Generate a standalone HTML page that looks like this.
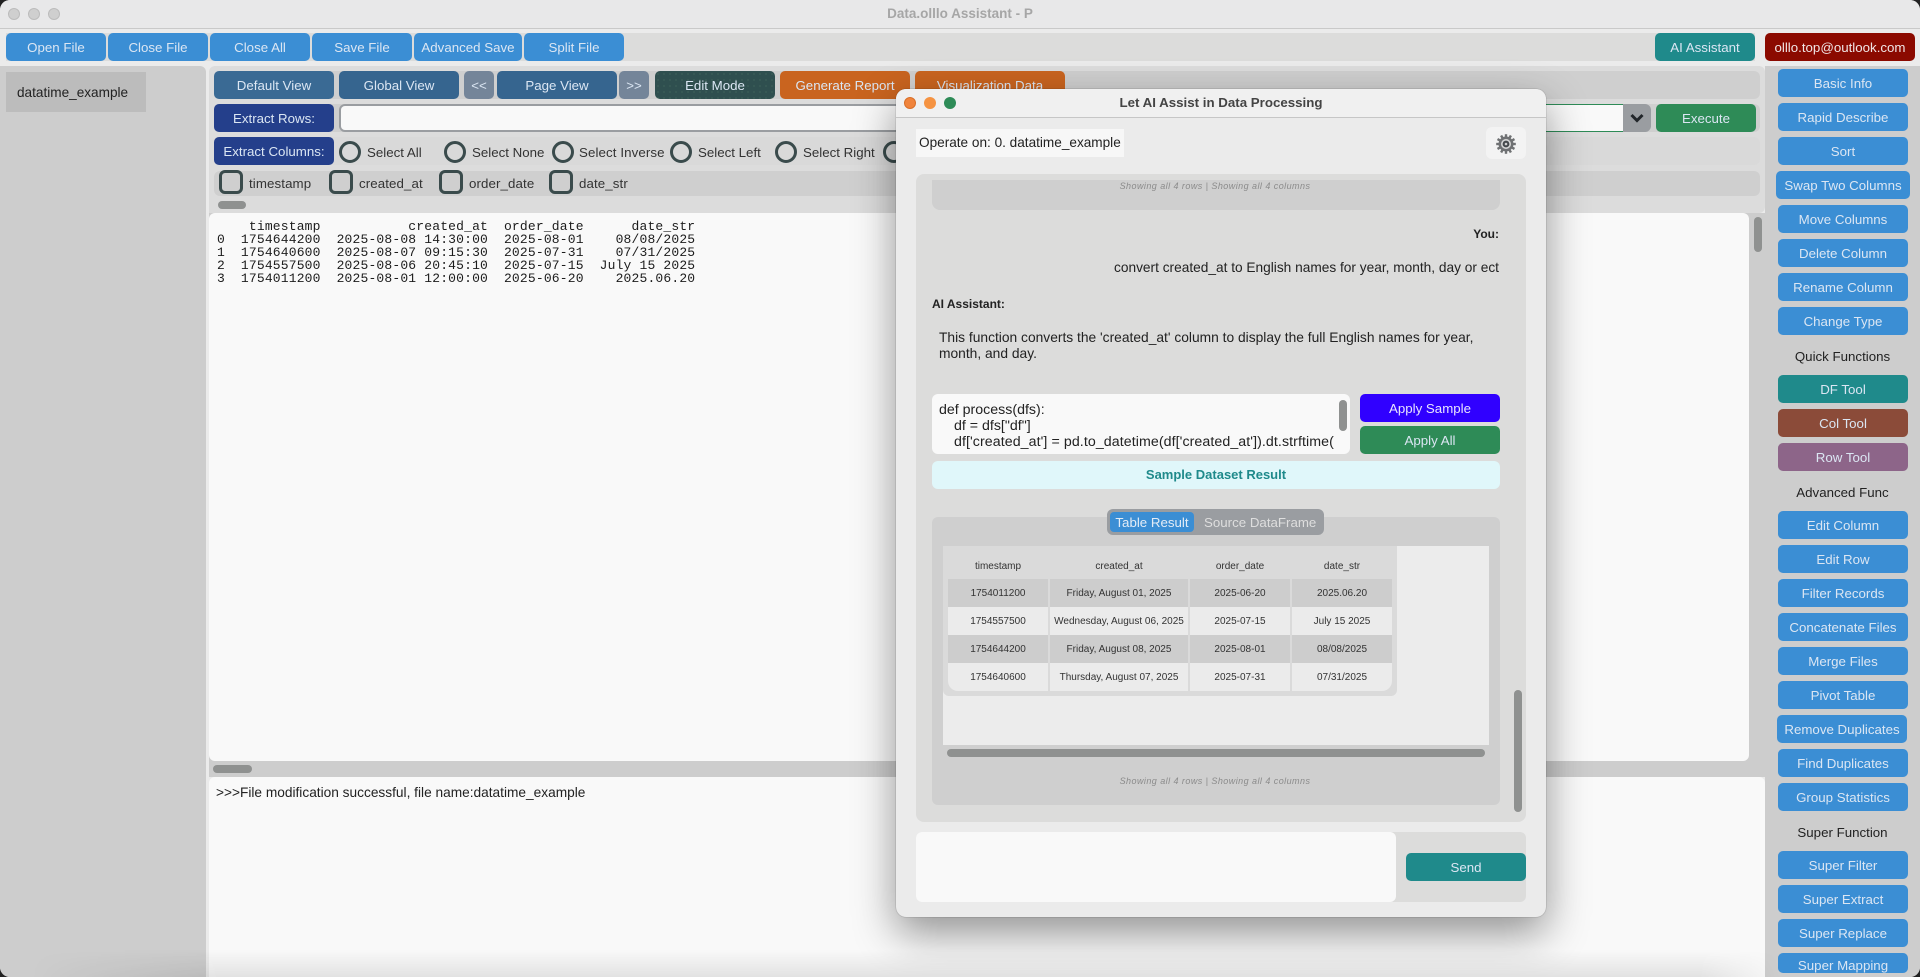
<!DOCTYPE html>
<html lang="en"><head><meta charset="utf-8"><title>Data.olllo Assistant - P</title>
<style>
html,body{margin:0;padding:0;width:1920px;height:977px;overflow:hidden;background:#222}
body{font-family:"Liberation Sans",sans-serif;font-size:13.3px;color:#222}
#w{position:absolute;left:0;top:0;width:1920px;height:977px;background:#ebebeb;border-radius:10px;overflow:hidden}
#w div,#w span.a,#w pre{position:absolute;box-sizing:border-box}
.b{height:28px;border-radius:5px;color:#dbe6f3;text-align:center;line-height:29px;background:#3b8ed4;white-space:nowrap}
.r{left:1778px;width:130px}
.l{left:1765px;width:155px;text-align:center;height:18px;line-height:20px;color:#222}
.s{height:28px;background:#cfcfcf;border-radius:6px}
.rad{width:22px;height:22px;border:3px solid #3a4b4c;border-radius:50%;top:141px}
.chk{width:24px;height:24px;border:3px solid #3a4b4c;border-radius:6px;top:170px}
.t{white-space:nowrap;line-height:18px;height:18px;color:#333}
.sb{background:#8f9190;border-radius:4px}
.c{height:28px;line-height:30px;text-align:center;font-size:10px;color:#333;white-space:nowrap}
.sh{font-style:italic;font-size:9px;letter-spacing:.45px;color:#8b8b8b;white-space:nowrap;text-align:center;line-height:12px;height:12px}
.p{font-size:13.75px}
</style></head><body>
<div id="w">
<!-- title bar -->
<div style="left:0;top:0;width:1920px;height:29px;background:#e8e8e9;border-bottom:1px solid #c9c9c9"></div>
<div style="left:8px;top:8px;width:12px;height:12px;border-radius:50%;background:#cfcfcf;border:1px solid #bcbcbc"></div>
<div style="left:28px;top:8px;width:12px;height:12px;border-radius:50%;background:#cfcfcf;border:1px solid #bcbcbc"></div>
<div style="left:48px;top:8px;width:12px;height:12px;border-radius:50%;background:#cfcfcf;border:1px solid #bcbcbc"></div>
<div style="left:760px;top:5px;width:400px;height:18px;line-height:18px;text-align:center;font-weight:bold;color:#a6a6a6;font-size:13.5px">Data.olllo Assistant - P</div>
<!-- toolbar -->
<div style="left:6px;top:33px;width:1749px;height:28px;background:#dcdcdb"></div>
<div class="b" style="left:6px;top:33px;width:100px">Open File</div>
<div class="b" style="left:108px;top:33px;width:100px">Close File</div>
<div class="b" style="left:210px;top:33px;width:100px">Close All</div>
<div class="b" style="left:312px;top:33px;width:100px">Save File</div>
<div class="b" style="left:414px;top:33px;width:108px">Advanced Save</div>
<div class="b" style="left:524px;top:33px;width:100px">Split File</div>
<div class="b" style="left:1655px;top:33px;width:100px;background:#1f8a8b">AI Assistant</div>
<div class="b" style="left:1765px;top:33px;width:150px;background:#8b0a00;color:#f0e6e6">olllo.top@outlook.com</div>
<!-- left panel -->
<div style="left:0;top:66px;width:206px;height:911px;background:#cdcdcd;border-radius:0 6px 0 0"></div>
<div style="left:6px;top:72px;width:140px;height:40px;background:#bcbcbc"></div>
<div class="t" style="left:17px;top:84px;color:#222;font-size:13.6px">datatime_example</div>
<!-- main upper -->
<div style="left:209px;top:66px;width:1556px;height:147px;background:#dcdcdc;border-radius:6px 6px 6px 0"></div>
<div class="s" style="left:214px;top:71px;width:1546px"></div>
<div class="b" style="left:214px;top:71px;width:120px;background:#3a6a94">Default View</div>
<div class="b" style="left:339px;top:71px;width:120px;background:#36658f">Global View</div>
<div class="b" style="left:464px;top:71px;width:30px;background:#748599">&lt;&lt;</div>
<div class="b" style="left:497px;top:71px;width:120px;background:#36658f">Page View</div>
<div class="b" style="left:619px;top:71px;width:30px;background:#748599">&gt;&gt;</div>
<div class="b" style="left:655px;top:71px;width:120px;background-color:#2f4f4f;background-image:radial-gradient(#47705f .5px,transparent .8px);background-size:6px 6px">Edit Mode</div>
<div class="b" style="left:780px;top:71px;width:130px;background:#c9641f">Generate Report</div>
<div class="b" style="left:915px;top:71px;width:150px;background:#c9641f">Visualization Data</div>
<div class="s" style="left:214px;top:104px;width:1546px"></div>
<div class="b" style="left:214px;top:104px;width:120px;background:#243f8b">Extract Rows:</div>
<div style="left:339px;top:104px;width:1284px;height:28px;background:#f9f9f9;border:2px solid #9a9da1;border-right:0;border-radius:6px 0 0 6px"></div>
<div style="left:1400px;top:104px;width:223px;height:28px;background:#f9f9f9;border-top:1px solid #2e8b57;border-bottom:1px solid #2e8b57"></div>
<div style="left:1623px;top:104px;width:28px;height:28px;background:#9a9da1;border-radius:0 6px 6px 0"></div>
<svg style="position:absolute;left:1630px;top:112px" width="14" height="12" viewBox="0 0 14 12"><path d="M1.5 3 L7 8.5 L12.5 3" fill="none" stroke="#22262a" stroke-width="3"/></svg>
<div class="b" style="left:1656px;top:104px;width:100px;background:#2e8b57">Execute</div>
<div class="s" style="left:214px;top:137px;width:1546px;background:#d9d9d9"></div>
<div class="b" style="left:214px;top:137px;width:120px;background:#243f8b">Extract Columns:</div>
<div class="rad" style="left:339px"></div><div class="t" style="left:367px;top:144px">Select All</div>
<div class="rad" style="left:444px"></div><div class="t" style="left:472px;top:144px">Select None</div>
<div class="rad" style="left:552px"></div><div class="t" style="left:579px;top:144px;letter-spacing:.1px">Select Inverse</div>
<div class="rad" style="left:670px"></div><div class="t" style="left:698px;top:144px">Select Left</div>
<div class="rad" style="left:775px"></div><div class="t" style="left:803px;top:144px">Select Right</div>
<div class="rad" style="left:883px"></div>
<div class="s" style="left:214px;top:171px;width:1546px;height:25px"></div>
<div class="chk" style="left:219px"></div><div class="t" style="left:249px;top:174.5px;letter-spacing:.1px">timestamp</div>
<div class="chk" style="left:329px"></div><div class="t" style="left:359px;top:174.5px;letter-spacing:.1px">created_at</div>
<div class="chk" style="left:439px"></div><div class="t" style="left:469px;top:174.5px;letter-spacing:.1px">order_date</div>
<div class="chk" style="left:549px"></div><div class="t" style="left:579px;top:174.5px;letter-spacing:.1px">date_str</div>
<div class="sb" style="left:218px;top:201px;width:28px;height:8px"></div>
<!-- data area -->
<div style="left:209px;top:213px;width:1556px;height:564px;background:#cdcdcd"></div>
<div style="left:209px;top:213px;width:1540px;height:548px;background:#f9f9f9;border-radius:6px"></div>
<pre style="left:217px;top:220px;margin:0;font:13px/13px 'Liberation Mono',monospace;letter-spacing:.17px;color:#1c1c1c">    timestamp           created_at  order_date      date_str
0  1754644200  2025-08-08 14:30:00  2025-08-01    08/08/2025
1  1754640600  2025-08-07 09:15:30  2025-07-31    07/31/2025
2  1754557500  2025-08-06 20:45:10  2025-07-15  July 15 2025
3  1754011200  2025-08-01 12:00:00  2025-06-20    2025.06.20</pre>
<div class="sb" style="left:1754px;top:217px;width:8px;height:35px"></div>
<div class="sb" style="left:213px;top:765px;width:39px;height:8px"></div>
<!-- log -->
<div style="left:209px;top:777px;width:1556px;height:200px;background:#f9f9f9;border-radius:6px 6px 0 0"></div>
<div class="t p" style="left:216px;top:784px;color:#222;font-size:13.7px">&gt;&gt;&gt;File modification successful, file name:datatime_example</div>
<!-- right panel -->
<div style="left:1765px;top:66px;width:155px;height:911px;background:#cdcdcd"></div>
<div class="b r" style="top:69px">Basic Info</div>
<div class="b r" style="top:103px">Rapid Describe</div>
<div class="b r" style="top:137px">Sort</div>
<div class="b" style="left:1776px;width:134px;top:171px">Swap Two Columns</div>
<div class="b r" style="top:205px">Move Columns</div>
<div class="b r" style="top:239px">Delete Column</div>
<div class="b r" style="top:273px">Rename Column</div>
<div class="b r" style="top:307px">Change Type</div>
<div class="l" style="top:347px">Quick Functions</div>
<div class="b r" style="top:375px;background:#1f8a8b">DF Tool</div>
<div class="b r" style="top:409px;background:#8b4b39">Col Tool</div>
<div class="b r" style="top:443px;background:#8d6589">Row Tool</div>
<div class="l" style="top:483px">Advanced Func</div>
<div class="b r" style="top:511px">Edit Column</div>
<div class="b r" style="top:545px">Edit Row</div>
<div class="b r" style="top:579px">Filter Records</div>
<div class="b r" style="top:613px">Concatenate Files</div>
<div class="b r" style="top:647px">Merge Files</div>
<div class="b r" style="top:681px">Pivot Table</div>
<div class="b" style="left:1777px;width:130px;top:715px">Remove Duplicates</div>
<div class="b r" style="top:749px">Find Duplicates</div>
<div class="b r" style="top:783px">Group Statistics</div>
<div class="l" style="top:823px">Super Function</div>
<div class="b r" style="top:851px">Super Filter</div>
<div class="b r" style="top:885px">Super Extract</div>
<div class="b r" style="top:919px">Super Replace</div>
<div class="b r" style="top:953px;height:20px;line-height:25px;overflow:hidden">Super Mapping</div>
<!-- bottom shade -->
<div style="left:0;top:950px;width:1780px;height:27px;background:linear-gradient(rgba(0,0,0,0),rgba(0,0,0,.09));-webkit-mask-image:linear-gradient(90deg,transparent 30px,#000 220px,#000 1700px,transparent);mask-image:linear-gradient(90deg,transparent 30px,#000 220px,#000 1700px,transparent)"></div>
<!-- dialog -->
<div style="left:896px;top:89px;width:650px;height:828px;background:#ebebeb;border-radius:10px;box-shadow:0 16px 42px rgba(0,0,0,.42),0 0 1px rgba(0,0,0,.5)">
<div style="left:0;top:0;width:650px;height:29px;background:#f0f0f0;border-bottom:1px solid #c6c6c6;border-radius:10px 10px 0 0"></div>
<div style="left:8px;top:8px;width:12px;height:12px;border-radius:50%;background:#f0843c;border:1px solid #d96f28"></div>
<div style="left:28px;top:8px;width:12px;height:12px;border-radius:50%;background:#f59342"></div>
<div style="left:48px;top:8px;width:12px;height:12px;border-radius:50%;background:#2e8b57"></div>
<div style="left:0;top:5px;width:650px;height:18px;line-height:18px;text-align:center;font-weight:bold;color:#444;font-size:13.3px">Let AI Assist in Data Processing</div>
</div>
<div style="left:916px;top:129px;width:208px;height:28px;background:#f7f7f7"></div>
<div class="t" style="left:919px;top:134px;color:#222;font-size:13.6px">Operate on: 0. datatime_example</div>
<div style="left:1486px;top:127px;width:40px;height:32px;background:#f3f3f3;border-radius:6px"></div>
<svg style="position:absolute;left:1495px;top:133px;filter:blur(.35px)" width="22" height="22" viewBox="0 0 22 22"><g fill="#6f7173"><circle cx="11" cy="11" r="7.5"/><rect x="9.8" y="1.2" width="2.4" height="19.6"/><rect x="9.8" y="1.2" width="2.4" height="19.6" transform="rotate(30 11 11)"/><rect x="9.8" y="1.2" width="2.4" height="19.6" transform="rotate(60 11 11)"/><rect x="9.8" y="1.2" width="2.4" height="19.6" transform="rotate(90 11 11)"/><rect x="9.8" y="1.2" width="2.4" height="19.6" transform="rotate(120 11 11)"/><rect x="9.8" y="1.2" width="2.4" height="19.6" transform="rotate(150 11 11)"/></g><circle cx="11" cy="11" r="5" fill="#d6d6d6"/><circle cx="11" cy="11" r="3.4" fill="#45494c"/><circle cx="11" cy="11" r="1.3" fill="#cfcfcf"/></svg>
<!-- chat panel -->
<div style="left:916px;top:174px;width:610px;height:648px;background:#dcdcdb;border-radius:8px"></div>
<div style="left:932px;top:180px;width:568px;height:30px;background:#cfcfcf;border-radius:0 0 8px 8px"></div>
<div class="sh" style="left:932px;top:180px;width:566px">Showing all 4 rows | Showing all 4 columns</div>
<div class="t" style="left:1300px;width:199px;top:225px;text-align:right;font-weight:bold;color:#222;font-size:12px">You:</div>
<div class="t" style="left:1050px;width:449px;top:259px;text-align:right;color:#222;font-size:13.7px">convert created_at to English names for year, month, day or ect</div>
<div class="t" style="left:932px;top:295px;font-weight:bold;color:#222;font-size:12px">AI Assistant:</div>
<div class="t" style="left:939px;top:329px;color:#222;font-size:13.8px">This function converts the 'created_at' column to display the full English names for year,</div>
<div class="t" style="left:939px;top:345px;color:#222;font-size:13.8px">month, and day.</div>
<!-- code -->
<div style="left:932px;top:394px;width:418px;height:60px;background:#f9f9f9;border-radius:6px"></div>
<div style="left:939px;top:394px;width:395px;height:60px;overflow:hidden;font-size:14.2px">
<div class="t" style="left:0;top:7px;color:#222">def process(dfs):</div>
<div class="t" style="left:15px;top:23px;color:#222">df = dfs["df"]</div>
<div class="t" style="left:15px;top:39px;color:#222;letter-spacing:.08px">df['created_at'] = pd.to_datetime(df['created_at']).dt.strftime(</div>
</div>
<div class="sb" style="left:1339px;top:400px;width:8px;height:31px"></div>
<div class="b" style="left:1360px;top:394px;width:140px;background:#3000ff;color:#e8e4ff">Apply Sample</div>
<div class="b" style="left:1360px;top:426px;width:140px;background:#2e8b57">Apply All</div>
<div style="left:932px;top:461px;width:568px;height:28px;line-height:28px;background:#e0f7fa;border-radius:6px;text-align:center;font-weight:bold;color:#1f8a8b;font-size:13px">Sample Dataset Result</div>
<!-- tab -->
<div style="left:932px;top:517px;width:568px;height:288px;background:#cfcfcf;border-radius:6px"></div>
<div style="left:1107px;top:509px;width:217px;height:26px;background:#9a9da1;border-radius:6px"></div>
<div style="left:1110px;top:512px;width:84px;height:20px;line-height:22px;background:#3b8ed4;border-radius:4px;text-align:center;color:#e3ecf6">Table Result</div>
<div style="left:1204px;top:512px;height:20px;line-height:22px;color:#dedede;white-space:nowrap">Source DataFrame</div>
<div style="left:943px;top:546px;width:546px;height:199px;background:#ececec"></div>
<div style="left:943px;top:546px;width:454px;height:150px;background:#dadada;border-radius:0 0 6px 6px"></div>
<div class="c" style="left:948px;top:552px;width:100px">timestamp</div><div class="c" style="left:1050px;top:552px;width:138px">created_at</div><div class="c" style="left:1190px;top:552px;width:100px">order_date</div><div class="c" style="left:1292px;top:552px;width:100px">date_str</div>
<div class="c" style="left:948px;top:579px;width:100px;background:#cdcdcd">1754011200</div><div class="c" style="left:1050px;top:579px;width:138px;background:#cdcdcd">Friday, August 01, 2025</div><div class="c" style="left:1190px;top:579px;width:100px;background:#cdcdcd">2025-06-20</div><div class="c" style="left:1292px;top:579px;width:100px;background:#cdcdcd">2025.06.20</div>
<div class="c" style="left:948px;top:607px;width:100px;background:#ebebeb">1754557500</div><div class="c" style="left:1050px;top:607px;width:138px;background:#ebebeb">Wednesday, August 06, 2025</div><div class="c" style="left:1190px;top:607px;width:100px;background:#ebebeb">2025-07-15</div><div class="c" style="left:1292px;top:607px;width:100px;background:#ebebeb">July 15 2025</div>
<div class="c" style="left:948px;top:635px;width:100px;background:#cdcdcd">1754644200</div><div class="c" style="left:1050px;top:635px;width:138px;background:#cdcdcd">Friday, August 08, 2025</div><div class="c" style="left:1190px;top:635px;width:100px;background:#cdcdcd">2025-08-01</div><div class="c" style="left:1292px;top:635px;width:100px;background:#cdcdcd">08/08/2025</div>
<div class="c" style="left:948px;top:663px;width:100px;background:#ebebeb;border-radius:0 0 0 10px">1754640600</div><div class="c" style="left:1050px;top:663px;width:138px;background:#ebebeb">Thursday, August 07, 2025</div><div class="c" style="left:1190px;top:663px;width:100px;background:#ebebeb">2025-07-31</div><div class="c" style="left:1292px;top:663px;width:100px;background:#ebebeb;border-radius:0 0 10px 0">07/31/2025</div>
<div class="sb" style="left:947px;top:749px;width:538px;height:8px"></div>
<div class="sh" style="left:932px;top:775px;width:566px">Showing all 4 rows | Showing all 4 columns</div>
<div class="sb" style="left:1514px;top:690px;width:8px;height:122px"></div>
<!-- input -->
<div style="left:916px;top:832px;width:610px;height:70px;background:#dcdcdb;border-radius:6px"></div>
<div style="left:916px;top:832px;width:480px;height:70px;background:#f9f9f9;border-radius:6px"></div>
<div class="b" style="left:1406px;top:853px;width:120px;background:#1f8a8b">Send</div>
</div>
</body></html>
